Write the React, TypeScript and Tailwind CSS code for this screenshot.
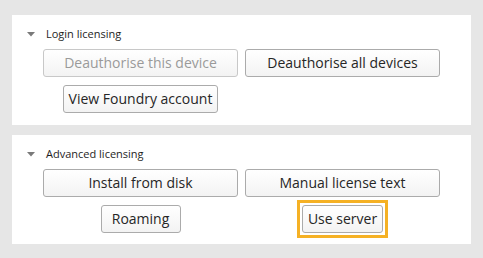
import type { ReactNode } from "react";

function Caret() {
  return (
    <svg width="8" height="5" viewBox="0 0 8 5" className="shrink-0">
      <path d="M0 0H8L4 4.5Z" fill="#7a7a7a" />
    </svg>
  );
}

function Btn({ children, disabled, full }: { children: ReactNode; disabled?: boolean; full?: boolean }) {
  return (
    <button
      type="button"
      disabled={disabled}
      className={
        (full ? "w-full " : "min-w-[80px] px-[5px] ") +
        "h-[28px] rounded-[3px] border bg-gradient-to-b from-white to-[#f3f3f3] text-[14px] leading-[26px] " +
        (disabled ? "border-[#c8c8c8] text-[#9a9a9a]" : "border-[#ababab] text-[#262626]")
      }
    >
      {children}
    </button>
  );
}

// square focus frame, drawn outside the button without moving it
function Focus({ children }: { children: ReactNode }) {
  return <div className="-m-[5px] flex border-[3px] border-[#f5b125] p-[2px]">{children}</div>;
}

function Section({ title, height, children }: { title: string; height: string; children: ReactNode }) {
  return (
    <section className={"bg-white px-[31px] pt-[12px] " + height}>
      <div className="-ml-[16px] flex h-[15px] items-center gap-[11px] text-[11px] text-[#1e1e1e]">
        <Caret />
        <span>{title}</span>
      </div>
      <div className="mt-[7px] grid grid-cols-2 gap-x-[7px] gap-y-[8px]">{children}</div>
    </section>
  );
}

export default function App() {
  return (
    <div className="flex h-[258px] w-[483px] flex-col gap-[10px] bg-[#e6e6e6] px-[12px] pt-[15px]" style={{ fontFamily: '"Open Sans", sans-serif' }}>
      <Section title="Login licensing" height="h-[110px]">
        <Btn full disabled>Deauthorise this device</Btn>
        <Btn full>Deauthorise all devices</Btn>
        <div className="flex justify-center">
          <Btn>View Foundry account</Btn>
        </div>
      </Section>
      <Section title="Advanced licensing" height="h-[109px]">
        <Btn full>Install from disk</Btn>
        <Btn full>Manual license text</Btn>
        <div className="flex justify-center">
          <Btn>Roaming</Btn>
        </div>
        <div className="flex justify-center">
          <Focus>
            <Btn>Use server</Btn>
          </Focus>
        </div>
      </Section>
    </div>
  );
}
